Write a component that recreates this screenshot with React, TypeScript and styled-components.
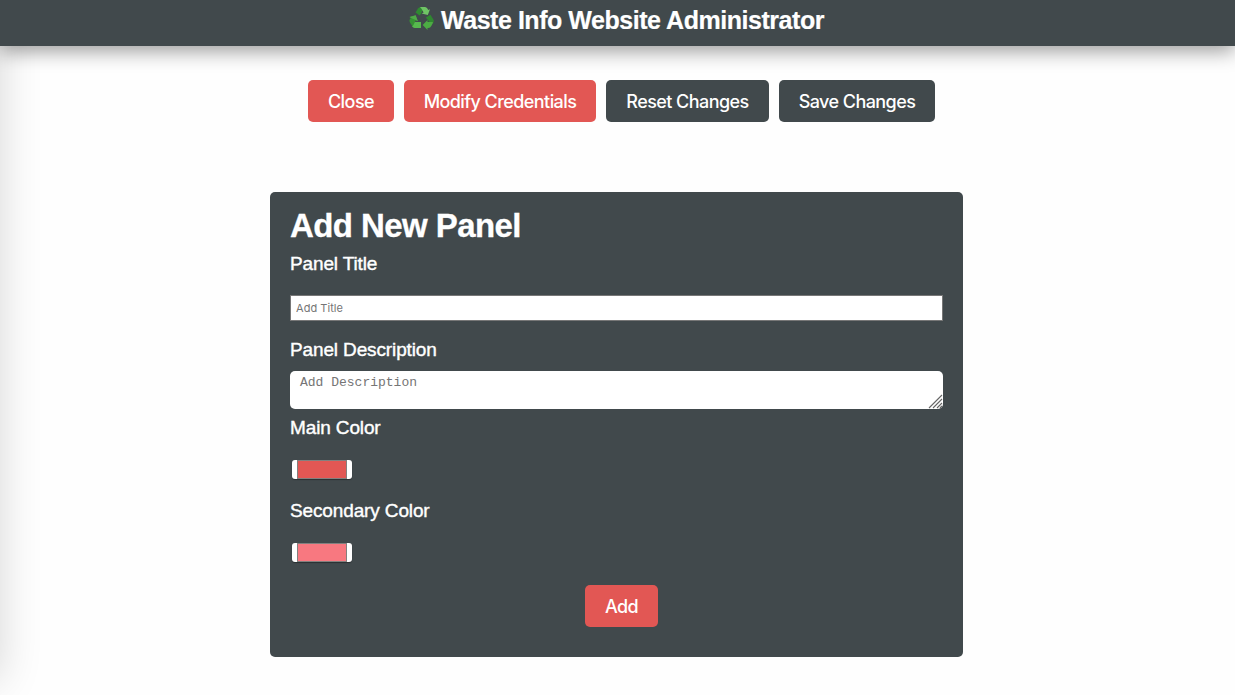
import React from "react";
import styled, { createGlobalStyle } from "styled-components";

const slate = "#41494c";
const red = "#e25754";

const GlobalStyle = createGlobalStyle`
  *, *::before { box-sizing: border-box; }
  html, body { margin: 0; height: 100%; overflow: hidden; background: #fefefe; }
  body { font-family: "Liberation Sans", Arial, sans-serif; -webkit-font-smoothing: antialiased; }
`;

const Page = styled.div`
  position: relative;
  height: 695px;
  overflow: hidden;
`;

const DrawerEdge = styled.aside`
  position: absolute;
  left: -250px;
  top: 0;
  width: 250px;
  height: 680px;
  box-shadow: 0 0 40px rgba(0, 0, 0, 0.16);
`;

const Header = styled.header`
  position: relative;
  display: flex;
  justify-content: center;
  height: 46px;
  padding: 5px 2px 0 0;
  background: ${slate};
  box-shadow: 0 5px 20px rgba(0, 0, 0, 0.4);
`;

const Title = styled.h1`
  display: flex;
  gap: 7px;
  margin: 0;
  color: #fff;
  font-size: 25px;
  line-height: 31px;
  font-weight: 700;
  letter-spacing: -0.46px;
  white-space: nowrap;
  -webkit-text-stroke: 0.2px #fff;
`;

const Logo = styled.svg`
  display: block;
  width: 25px;
  height: 23px;
  margin-top: 2px;
`;

const Actions = styled.nav`
  display: flex;
  gap: 10px;
  padding: 34px 0 0 308px;
`;

const Button = styled.button<{ $width: number; $dark?: boolean }>`
  width: ${(p) => p.$width}px;
  height: 42px;
  padding: 2px 0 0;
  border: 0;
  border-radius: 5px;
  background: ${(p) => (p.$dark ? slate : red)};
  color: #fff;
  font: 500 18px/40px Inter, sans-serif;
  letter-spacing: -0.57px;
  white-space: nowrap;
`;

const Panel = styled.form`
  display: flex;
  flex-direction: column;
  width: 693px;
  height: 465px;
  margin: 70px 0 0 270px;
  padding: 13px 20px 0;
  border-radius: 5px;
  background: ${slate};
`;

const Heading = styled.h2`
  margin: 0 0 5px;
  color: #fff;
  font-size: 33px;
  line-height: 42px;
  letter-spacing: -0.57px;
  -webkit-text-stroke: 0.3px #fff;
`;

const Label = styled.label<{ $gap: number }>`
  height: 24px;
  margin-bottom: ${(p) => p.$gap}px;
  color: #fff;
  font-size: 19px;
  line-height: 24px;
  letter-spacing: -0.13px;
  -webkit-text-stroke: 0.4px #fff;
`;

const TitleInput = styled.input`
  width: 653px;
  height: 26px;
  flex: none;
  margin: 0 0 17px;
  padding: 0 5px;
  border: 1px solid #777;
  border-radius: 0;
  background: #fff;
  font: 11px Inter, sans-serif;
  letter-spacing: 0.05px;
  &::placeholder { color: #757575; opacity: 1; }
`;

const DescriptionWrap = styled.div`
  position: relative;
  height: 38px;
  margin-bottom: 7px;
`;

const Description = styled.textarea`
  display: block;
  width: 653px;
  height: 38px;
  padding: 4px 10px;
  border: 0;
  border-radius: 5px;
  background: #fff;
  resize: none;
  overflow: hidden;
  font: 13px/15px "Liberation Mono", monospace;
  &::placeholder { color: #757575; opacity: 1; }
`;

const Grip = styled.svg`
  position: absolute;
  right: 0;
  bottom: 0;
  width: 15px;
  height: 15px;
`;

const Swatch = styled.div<{ $color: string; $gap: number }>`
  width: 60px;
  height: 19px;
  flex: none;
  margin: 0 0 ${(p) => p.$gap}px 2px;
  padding: 0 5px;
  border-radius: 3px;
  background: #fff;
  box-shadow: 0 1px 1px rgba(0, 0, 0, 0.35);
  &::before {
    content: "";
    display: block;
    height: 19px;
    border: 1px solid #83807f;
    background: ${(p) => p.$color};
  }
`;

const Submit = styled.div`
  display: flex;
  padding-left: 295px;
`;

function RecycleLogo() {
  return (
    <Logo viewBox="0 0 25 23">
      <path d="M6.5 5.6 9 1.6Q10 .1 12 .1L15 .3 12 6.8 10.6 8.6Z" fill="#2f8a31" />
      <path d="M11 .1H16Q17.5.2 18.4 1.6L19.2 3 21 2.3 18.8 8 12.7 6.6 14.6 5.6 12.5 1.8Z" fill="#6fc465" />
      <path d="M16.8 10.4 21.4 7.7 24.4 12.4Q25.2 14 24.2 15.8L20.4 15.1Z" fill="#2f8730" />
      <path d="M24.2 15.4 22.3 19Q21.3 21 19.5 21H18.5V23L13.7 18 18.5 13V15.1L23.2 15Z" fill="#4cac43" />
      <path d="M3.3 14.9H12V21H5.7Q4 21 3 19.3Z" fill="#57b94e" />
      <path d="M.5 9.9 6.7 8.3 8.9 14.3 6.9 13.2 3.6 19.6.8 15.3Q0 13.5.9 12.1L2.1 10.9Z" fill="#379234" />
      <path d="M.5 9.9 6.7 8.3 8.9 14.3 6.6 12.9 2.1 10.9Z" fill="#50aa48" />
    </Logo>
  );
}

export default function App() {
  return (
    <>
      <GlobalStyle />
      <Page>
        <DrawerEdge />
        <Header>
          <Title><RecycleLogo /><span>Waste Info Website Administrator</span></Title>
        </Header>
        <Actions>
          <Button $width={86}>Close</Button>
          <Button $width={192}>Modify Credentials</Button>
          <Button $width={163} $dark>Reset Changes</Button>
          <Button $width={156} $dark>Save Changes</Button>
        </Actions>
        <Panel>
          <Heading>Add New Panel</Heading>
          <Label $gap={19}>Panel Title</Label>
          <TitleInput placeholder="Add Title" />
          <Label $gap={9}>Panel Description</Label>
          <DescriptionWrap>
            <Description placeholder="Add Description" />
            <Grip viewBox="0 0 15 15" fill="none" stroke="#666" strokeWidth="1.1">
              <path d="M1 14 14 1M5 14 14 5M9 14 14 9M12 14 14 12" />
            </Grip>
          </DescriptionWrap>
          <Label $gap={20}>Main Color</Label>
          <Swatch $color={red} $gap={20} />
          <Label $gap={20}>Secondary Color</Label>
          <Swatch $color="#f87880" $gap={23} />
          <Submit><Button type="button" $width={73}>Add</Button></Submit>
        </Panel>
      </Page>
    </>
  );
}
